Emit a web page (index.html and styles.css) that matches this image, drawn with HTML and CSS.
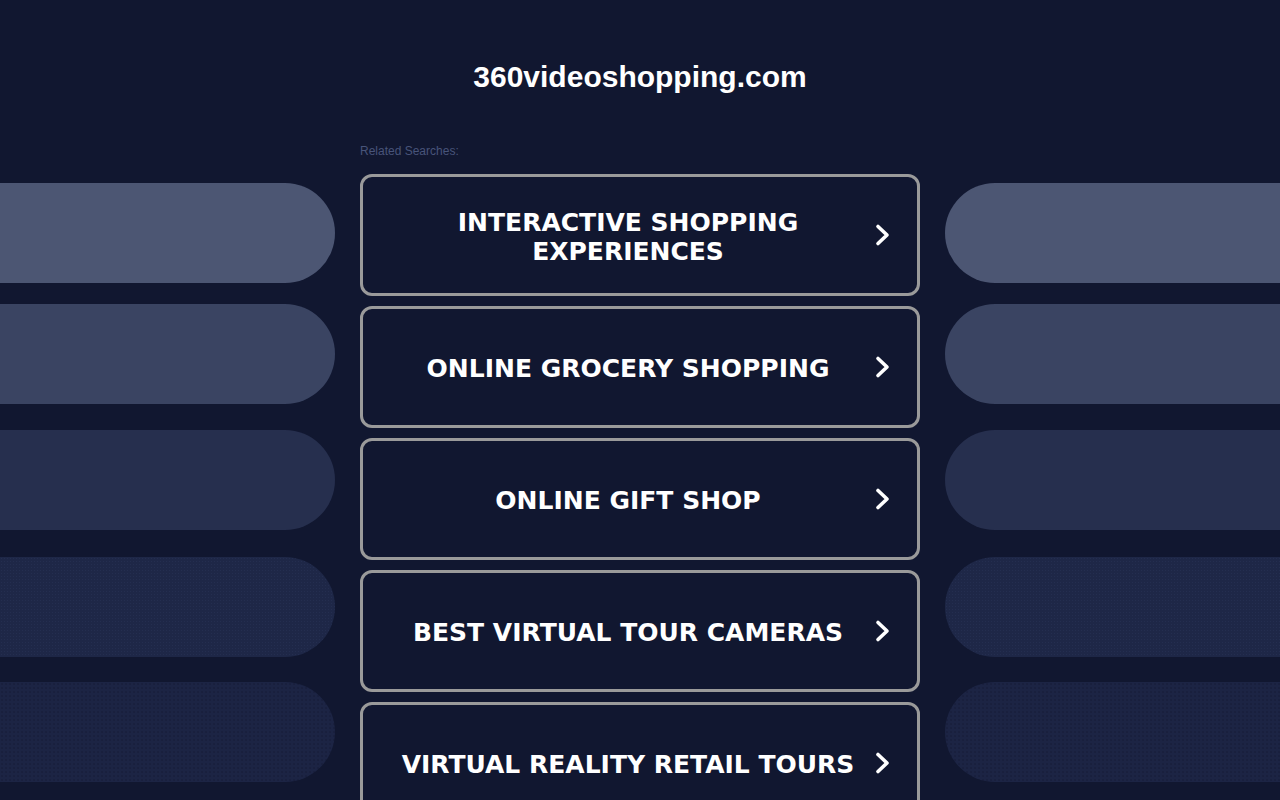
FILE: index.html
```html
<!DOCTYPE html>
<html lang="en">
<head>
<meta charset="utf-8">
<title>360videoshopping.com</title>
<link rel="stylesheet" href="styles.css">
</head>
<body>
<div class="page">
  <aside class="side side-left">
    <div class="pill p1"></div>
    <div class="pill p2"></div>
    <div class="pill p3"></div>
    <div class="pill p4"></div>
    <div class="pill p5"></div>
  </aside>
  <main class="center">
    <h1 class="title">360videoshopping.com</h1>
    <div class="related">Related Searches:</div>
    <ul class="links">
      <li><a class="link" href="#"><span class="link-text">INTERACTIVE SHOPPING EXPERIENCES</span><svg class="chev" viewBox="0 0 20 24" width="20" height="24"><path d="M5 3.5 L14 12 L5 20.5" /></svg></a></li>
      <li><a class="link" href="#"><span class="link-text">ONLINE GROCERY SHOPPING</span><svg class="chev" viewBox="0 0 20 24" width="20" height="24"><path d="M5 3.5 L14 12 L5 20.5" /></svg></a></li>
      <li><a class="link" href="#"><span class="link-text">ONLINE GIFT SHOP</span><svg class="chev" viewBox="0 0 20 24" width="20" height="24"><path d="M5 3.5 L14 12 L5 20.5" /></svg></a></li>
      <li><a class="link" href="#"><span class="link-text">BEST VIRTUAL TOUR CAMERAS</span><svg class="chev" viewBox="0 0 20 24" width="20" height="24"><path d="M5 3.5 L14 12 L5 20.5" /></svg></a></li>
      <li><a class="link" href="#"><span class="link-text">VIRTUAL REALITY RETAIL TOURS</span><svg class="chev" viewBox="0 0 20 24" width="20" height="24"><path d="M5 3.5 L14 12 L5 20.5" /></svg></a></li>
    </ul>
  </main>
  <aside class="side side-right">
    <div class="pill p1"></div>
    <div class="pill p2"></div>
    <div class="pill p3"></div>
    <div class="pill p4"></div>
    <div class="pill p5"></div>
  </aside>
</div>
</body>
</html>
```

FILE: styles.css
```css
html, body {
  margin: 0;
  padding: 0;
  height: 100%;
  overflow: hidden;
}
body {
  background: #111730;
  font-family: "Liberation Sans", Arial, sans-serif;
  color: #ffffff;
}
.page {
  display: grid;
  grid-template-columns: 335px 560px 335px;
  column-gap: 25px;
  height: 800px;
  overflow: hidden;
}
.side {
  display: flex;
  flex-direction: column;
  padding-top: 183px;
}
.pill {
  height: 100px;
  flex: none;
}
.side-left .pill {
  border-radius: 0 50px 50px 0;
}
.side-right .pill {
  border-radius: 50px 0 0 50px;
}
.pill.p1 { background: #4c5673; }
.pill.p2 { background: #3a4462; margin-top: 21px; }
.pill.p3 { background: #262f4e; margin-top: 26px; }
.pill.p4 {
  background-color: #1e2747;
  background-image: radial-gradient(circle, rgba(60, 80, 125, 0.18) 0.6px, transparent 0.9px);
  background-size: 3px 3px;
  margin-top: 27px;
}
.pill.p5 {
  background-color: #1c2444;
  background-image: radial-gradient(circle, rgba(10, 15, 35, 0.3) 0.6px, transparent 0.9px);
  background-size: 4px 4px;
  margin-top: 25px;
}
.center {
  display: flex;
  flex-direction: column;
}
.title {
  margin: 60px 0 0;
  font-size: 30px;
  line-height: 34px;
  font-weight: bold;
  text-align: center;
  color: #ffffff;
}
.related {
  margin-top: 50px;
  font-size: 12px;
  line-height: 14px;
  color: #48547a;
}
.links {
  list-style: none;
  margin: 16px 0 0;
  padding: 0;
  display: flex;
  flex-direction: column;
  gap: 10px;
}
.link {
  box-sizing: border-box;
  height: 122px;
  display: flex;
  align-items: center;
  border: 3px solid #9a9a9a;
  border-radius: 12px;
  padding: 0 24px 0 20px;
  text-decoration: none;
  color: #ffffff;
  background: #111730;
}
.link-text {
  flex: 1;
  text-align: center;
  font-family: "DejaVu Sans", Verdana, sans-serif;
  font-weight: bold;
  font-size: 25px;
  line-height: 29px;
  padding-top: 3px;
  letter-spacing: 0;
}
.chev {
  flex: none;
  display: block;
}
.chev path {
  fill: none;
  stroke: #ffffff;
  stroke-width: 3.6;
  stroke-linecap: round;
  stroke-linejoin: round;
}
```
